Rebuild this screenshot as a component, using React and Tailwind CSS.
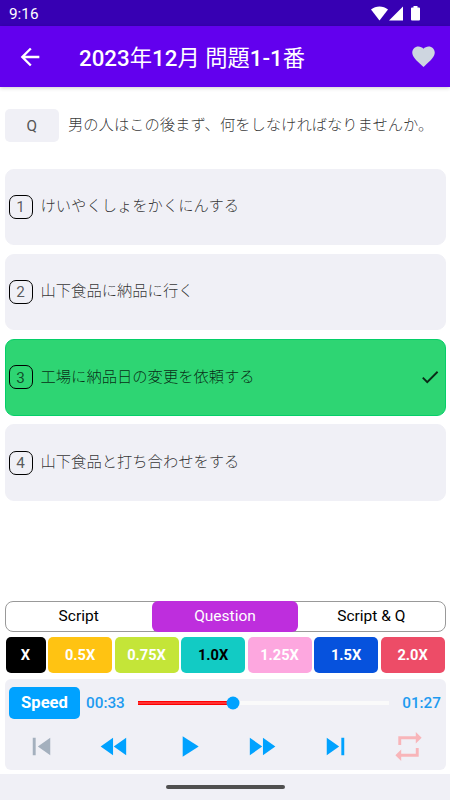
import React, { useState } from 'react';
import {
  MdArrowBack,
  MdCheck,
  MdFastForward,
  MdFastRewind,
  MdFavorite,
  MdPlayArrow,
  MdRepeat,
  MdSkipNext,
  MdSkipPrevious
} from 'react-icons/md';

const OPTIONS = [
    'けいやくしょをかくにんする',
    '山下食品に納品に行く',
    '工場に納品日の変更を依頼する',
    '山下食品と打ち合わせをする',
];

const TABS = ['Script', 'Question', 'Script & Q'];

const SPEEDS = [
    { label: '0.5X', style: 'bg-[#ffc312] text-white' },
    { label: '0.75X', style: 'bg-[#c4e538] text-white' },
    { label: '1.0X', style: 'bg-[#12cbc4] text-black' },
    { label: '1.25X', style: 'bg-[#fda7df] text-white' },
    { label: '1.5X', style: 'bg-[#0652dd] text-white' },
    { label: '2.0X', style: 'bg-[#ed4c67] text-white' },
];

const StatusBar = () => (
    <div className="h-[26px] bg-[#3700b3] flex items-center justify-between pl-[9px] pr-[30px] text-white">
        <span className="text-[15.3px] leading-none pt-[3px]">9:16</span>
        <div className="flex items-end">
            <svg width="17" height="15" viewBox="0 0 17 15" fill="currentColor">
                <path d="M0 3.6C4.8-.4 12.2-.4 17 3.6L8.5 14.5z" />
            </svg>
            <svg className="ml-px" width="14" height="15" viewBox="0 0 14 15" fill="currentColor">
                <path d="M0 14.5L14 .5v14z" />
            </svg>
            <svg className="ml-[8px]" width="9" height="15" viewBox="0 0 9 15" fill="currentColor">
                <path d="M2.5 0h4v1.5H8q1 0 1 1v11q0 1-1 1H1q-1 0-1-1v-11q0-1 1-1h1.5z" />
            </svg>
        </div>
    </div>
);

const Header = () => (
    <header className="h-[61px] bg-[#6200ee] flex items-center pl-[16px] pr-[13px] text-white shadow-[0_1px_4px_rgba(0,0,0,0.2)]">
        <MdArrowBack size={28} />
        <h1 className="ml-[35px] pt-[3px] text-[22.3px] font-medium leading-none whitespace-nowrap">
            2023<span className="font-normal">年</span>12<span className="font-normal">月 問題</span>1-1<span className="font-normal">番</span>
        </h1>
        <MdFavorite size={27} className="ml-auto text-[#ced6e0]" />
    </header>
);

const App = () => {
    const [tab, setTab] = useState('Question');
    const [selected, setSelected] = useState(2);

    const elapsed = 33;
    const total = 87;
    const progress = `${(elapsed / total) * 100}%`;

    return (
        <div className="w-[450px] h-[800px] bg-white flex flex-col overflow-hidden font-[Roboto,'Noto_Sans_CJK_JP',sans-serif]">
            <StatusBar />
            <Header />

            <main className="px-[4.5px] pt-[22px] flex-1">
                <div className="flex items-center">
                    <div className="w-[54.5px] h-[33px] rounded-[5px] bg-[#f0f0f6] flex items-center justify-center text-[15.3px] text-[#555555] pt-[2px]">Q</div>
                    <p className="ml-[9px] text-[15.3px] font-extralight leading-none text-black/80 whitespace-nowrap pt-px">男の人はこの後まず、何をしなければなりませんか。</p>
                </div>

                <div className="mt-[26.5px] flex flex-col gap-[8.8px]">
                    {OPTIONS.map((text, i) => (
                        <button
                            key={text}
                            onClick={() => setSelected(i)}
                            className={`h-[76.5px] rounded-[9px] border flex items-center pl-[3px] pr-[4px] text-left
                                ${selected === i ? 'bg-[#2ed573] border-[#05cf68]' : 'bg-[#f0f0f6] border-[#f0f0f6]'}
                            `}
                        >
                            <span className="w-[24px] h-[24px] rounded-[7px] border-[1.3px] border-black flex items-center justify-center text-[15.3px] leading-none pt-[2px] text-black/65">{i + 1}</span>
                            <span className="ml-[8px] text-[15.3px] font-extralight leading-none text-black/80">{text}</span>
                            {selected === i && <MdCheck size={22} className="ml-auto opacity-80" />}
                        </button>
                    ))}
                </div>
            </main>

            <section className="px-[4.5px]">
                {/* View tabs */}
                <div className="h-[31px] rounded-[8px] border border-[#999999] grid grid-cols-3">
                    {TABS.map((name) => (
                        <button
                            key={name}
                            onClick={() => setTab(name)}
                            className={`-my-px rounded-[6px] text-[15.5px] pt-px ${tab === name ? 'bg-[#be2edd] text-white' : 'text-black'}`}
                        >
                            {name}
                        </button>
                    ))}
                </div>

                {/* Playback speeds */}
                <div className="mt-[5px] mx-px flex gap-[2.6px] h-[36px] text-[14.6px] font-bold">
                    <button className="w-[40px] rounded-[5px] bg-black text-white pt-[2px]">X</button>
                    {SPEEDS.map((speed) => (
                        <button key={speed.label} className={`flex-1 rounded-[5px] pt-[2px] ${speed.style}`}>{speed.label}</button>
                    ))}
                </div>

                {/* Player */}
                <div className="mt-[6.5px] h-[90.5px] rounded-[6px] bg-[#f0f0f6] pt-[7.5px] text-[#00a2ff]">
                    <div className="flex items-center pl-[4.5px] pr-[4.5px]">
                        <button className="w-[71px] h-[32.5px] rounded-[5px] bg-[#00a2ff] text-white text-[16.6px] font-bold pt-[2px]">Speed</button>
                        <span className="ml-[6px] w-[39px] text-[15.3px] font-medium text-[#1e9bf0] pt-px">00:33</span>
                        <div className="relative ml-[13px] w-[251px] h-[4px] bg-[#fafafa]">
                            <div className="h-full bg-[#ff3333] border-y border-[#ff0000]" style={{ width: progress }}></div>
                            <div className="absolute top-1/2 size-[13px] rounded-full bg-[#00a2ff] -translate-x-1/2 -translate-y-1/2" style={{ left: progress }}></div>
                        </div>
                        <span className="ml-auto text-[15.3px] font-medium text-[#1e9bf0] pt-px">01:27</span>
                    </div>
                    <div className="mt-[9.5px] grid grid-cols-6 justify-items-center">
                        <button className="text-[#a4b0be]"><MdSkipPrevious size={35} /></button>
                        <button><MdFastRewind size={35} /></button>
                        <button><MdPlayArrow size={35} /></button>
                        <button><MdFastForward size={35} /></button>
                        <button><MdSkipNext size={35} /></button>
                        <button className="text-[#f8b5b9]"><MdRepeat size={35} /></button>
                    </div>
                </div>
            </section>

            {/* System gesture bar */}
            <div className="mt-[4.5px] h-[26px] bg-[#f0f0f6] flex justify-center pt-[11px]">
                <div className="w-[119px] h-[4px] rounded-full bg-[#505050]"></div>
            </div>
        </div>
    );
};

export default App;
